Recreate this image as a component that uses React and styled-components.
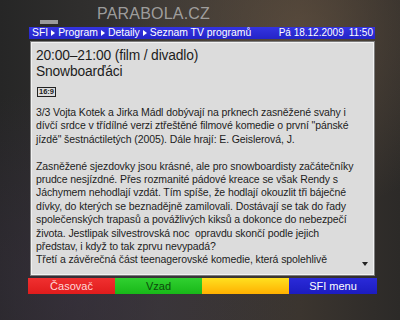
import React from "react";
import styled, { createGlobalStyle } from "styled-components";

const Global = createGlobalStyle`
  html, body { margin: 0; padding: 0; }
  body { width: 400px; height: 320px; overflow: hidden; font-family: "Liberation Sans", Arial, sans-serif; }
`;

const Screen = styled.div`
  position: relative;
  width: 400px;
  height: 320px;
  box-sizing: border-box;
  padding: 20px 22px 0 28px;
  display: flex;
  flex-direction: column;
  background:
    radial-gradient(ellipse at 75% 10%, rgba(110, 90, 70, 0.55), transparent 45%),
    radial-gradient(ellipse at 20% 90%, rgba(60, 50, 70, 0.5), transparent 50%),
    linear-gradient(90deg, #262626 0%, #383634 40%, #3b352f 75%, #2c2a28 100%);
  overflow: hidden;
`;

const Watermark = styled.div`
  position: absolute;
  left: 97px;
  top: 5px;
  font-size: 16px;
  letter-spacing: 0.2px;
  color: rgba(185, 185, 185, 0.8);
`;

const Tab = styled.div`
  width: 18px;
  height: 4px;
  margin-left: 12px;
  margin-bottom: 3px;
  background: #9a9a9a;
`;

const Header = styled.div`
  width: 346px;
  margin-left: 1px;
  height: 12px;
  box-sizing: border-box;
  padding: 0 2px 0 3px;
  background: linear-gradient(180deg, #3434e0, #2424c8);
  color: #fff;
  font-size: 10.4px;
  line-height: 12px;
  display: flex;
  justify-content: space-between;
  align-items: center;
  white-space: nowrap;
`;

const Crumbs = styled.div`
  display: flex;
  align-items: center;
  gap: 3px;
`;

const Sep = styled.span`
  display: inline-block;
  width: 0;
  height: 0;
  border-top: 3.5px solid transparent;
  border-bottom: 3.5px solid transparent;
  border-left: 4px solid #fff;
`;

const DateTime = styled.div`
  display: flex;
  gap: 5px;
  font-size: 10px;
`;

const Panel = styled.div`
  position: relative;
  width: 345px;
  height: 235px;
  margin-left: 2px;
  margin-top: 2px;
  box-sizing: border-box;
  border: 1px solid #7c7c7c;
  box-shadow: inset 0 0 0 1px #f2f2f2;
  background: #dcdcdc;
  padding: 6px 6px 0 5px;
  color: #1c1c1c;
  overflow: hidden;
`;

const Title = styled.div`
  font-size: 13.8px;
  line-height: 16px;
  letter-spacing: -0.15px;
`;

const Badge = styled.div`
  display: inline-block;
  margin-top: 7px;
  margin-left: 1px;
  border: 1px solid #222;
  font-size: 7.5px;
  line-height: 8px;
  padding: 0 1px;
  font-weight: bold;
`;

const Body = styled.div`
  margin-top: 8px;
  font-size: 10.5px;
  line-height: 13.4px;
  letter-spacing: -0.1px;
  white-space: pre;
`;

const ScrollArrow = styled.div`
  position: absolute;
  right: 6px;
  bottom: 9px;
  width: 0;
  height: 0;
  border-left: 3.5px solid transparent;
  border-right: 3.5px solid transparent;
  border-top: 4px solid #222;
`;

const Buttons = styled.div`
  display: grid;
  grid-template-columns: 87px 87px 87px 88px;
  width: 349px;
  height: 16px;
  margin-top: 2px;
`;

const Btn = styled.div`
  display: flex;
  align-items: center;
  justify-content: center;
  font-size: 11px;
  color: ${(p) => p.$fg};
  background: ${(p) => p.$bg};
`;

const bodyLines = [
  "3/3 Vojta Kotek a Jirka Mádl dobývají na prknech zasněžené svahy i",
  "dívčí srdce v třídílné verzi ztřeštěné filmové komedie o první \"pánské",
  "jízdě\" šestnáctiletých (2005). Dále hrají: E. Geislerová, J.",
  "",
  "Zasněžené sjezdovky jsou krásné, ale pro snowboardisty začátečníky",
  "prudce nesjízdné. Přes rozmanité pádové kreace se však Rendy s",
  "Jáchymem nehodlají vzdát. Tím spíše, že hodlají okouzlit tři báječné",
  "dívky, do kterých se beznadějně zamilovali. Dostávají se tak do řady",
  "společenských trapasů a povážlivých kiksů a dokonce do nebezpečí",
  "života. Jestlipak silvestrovská noc  opravdu skončí podle jejich",
  "představ, i když to tak zprvu nevypadá?",
  "Třetí a závěrečná část teenagerovské komedie, která spolehlivě",
];

export default function App() {
  return (
    <>
      <Global />
      <Screen>
        <Watermark>PARABOLA.CZ</Watermark>
        <Tab />
        <Header>
          <Crumbs>
            <span>SFI</span>
            <Sep />
            <span>Program</span>
            <Sep />
            <span>Detaily</span>
            <Sep />
            <span>Seznam TV programů</span>
          </Crumbs>
          <DateTime>
            <span>Pá 18.12.2009</span>
            <span>11:50</span>
          </DateTime>
        </Header>
        <Panel>
          <Title>20:00–21:00 (film / divadlo)</Title>
          <Title>Snowboarďáci</Title>
          <Badge>16:9</Badge>
          <Body>{bodyLines.join("\n")}</Body>
          <ScrollArrow />
        </Panel>
        <Buttons>
          <Btn $bg="linear-gradient(180deg,#f03030,#e01c1c)" $fg="#ffd8d8">Časovač</Btn>
          <Btn $bg="linear-gradient(180deg,#30d030,#18b818)" $fg="#0c4a0c">Vzad</Btn>
          <Btn $bg="linear-gradient(180deg,#ffe020,#ffb000)" $fg="#000" />
          <Btn $bg="linear-gradient(180deg,#2a2ad8,#1c1cc0)" $fg="#ffffff">SFI menu</Btn>
        </Buttons>
      </Screen>
    </>
  );
}
